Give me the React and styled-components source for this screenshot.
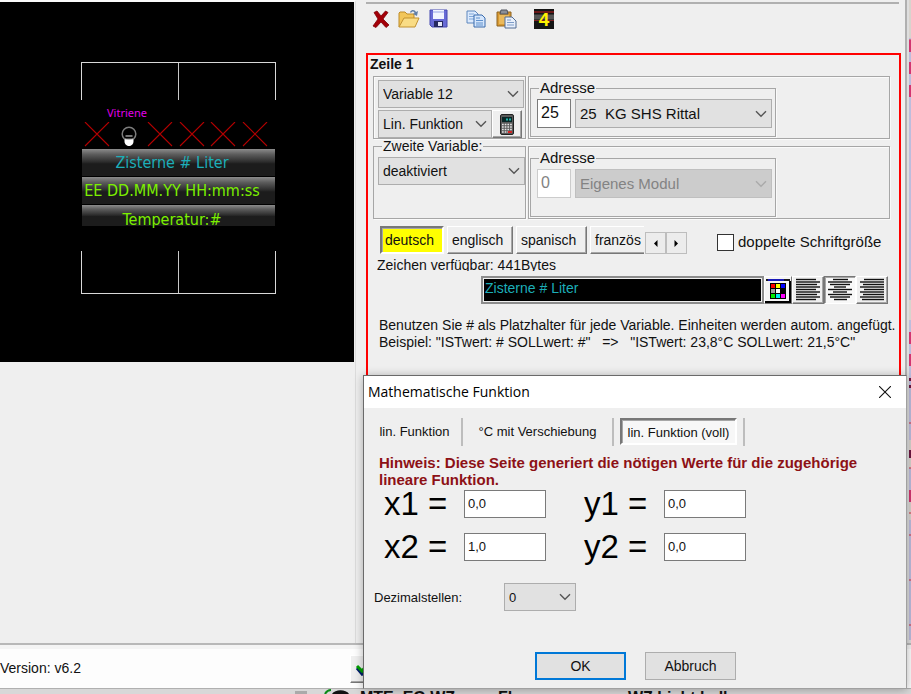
import React from "react";
import styled, { createGlobalStyle, css } from "styled-components";

const Global = createGlobalStyle`
  *, *::before, *::after { box-sizing: border-box; }
  body { margin: 0; background: #efefef; color: #111; font: 14px/17px "Liberation Sans", Arial, sans-serif; }
  button, input, select { font: inherit; color: inherit; margin: 0; border-radius: 0; }
`;

const Page = styled.div`
  position: relative;
  display: flex;
  flex-direction: column;
  min-height: 100vh;
  overflow: hidden;
`;
const Main = styled.main`
  flex: 1;
  display: flex;
  border-bottom: 2px solid #b8b8b8;
`;
const PreviewColumn = styled.section`
  flex: 0 0 356px;
  border-top: 2px solid #fafafa;
  border-right: 1px solid #dcdcdc;
`;
const Display = styled.div`
  display: flex;
  flex-direction: column;
  width: 354px;
  height: 360px;
  padding: 60px 78px 0 81px;
  background: #000;
`;
const Bracket = styled.div`
  display: grid;
  grid-template-columns: 1fr 1fr;
  height: ${(p) => (p.$bottom ? 43 : 38)}px;
  margin-top: ${(p) => (p.$bottom ? 24 : 0)}px;
  border: 1px solid #d8d8d8;
  border-${(p) => (p.$bottom ? "top" : "bottom")}: 0;
  &::before { content: ""; border-right: 1px solid #c8c8c8; }
`;
const DisplayLabel = styled.div`
  margin: 4px 0 0 26px;
  color: #e000e8;
  font: 11px/18px "Noto Sans", sans-serif;
`;
const Slots = styled.div`
  display: flex;
  justify-content: space-between;
  height: 27px;
  padding: 0 8px 0 3px;
`;
const DisplayLine = styled.div`
  height: ${(p) => p.$height}px;
  margin: 0 1px 1px;
  padding-top: ${(p) => p.$pad}px;
  padding-right: 13px;
  text-align: center;
  white-space: nowrap;
  color: ${(p) => p.$color};
  background: linear-gradient(#8c8c8c 0, #5c5c5c 20%, #2c2c2c 48%, #1c1c1c 55%, #1c1c1c);
  font: 16px/22px "DejaVu Sans Condensed", "DejaVu Sans", sans-serif;
`;

const Editor = styled.section`
  flex: 1;
  display: flex;
  flex-direction: column;
  min-width: 0;
  padding: 2px 4px 0 10px;
`;
const Toolbar = styled.div`
  display: flex;
  align-items: center;
  height: 51px;
  margin-right: 2px;
  padding: 0 0 20px 4px;
  border-top: 2px solid #b0b0b0;
`;
const ToolButton = styled.button`
  display: grid;
  place-items: center;
  width: 22px;
  height: 22px;
  padding: 0;
  margin-right: ${(p) => p.$gap}px;
  border: 0;
  background: none;
`;
const RowBox = styled.div`
  flex: 1;
  border: 2px solid #f00;
  padding: 1px 9px 0 5px;
`;
const RowTitle = styled.h2`
  margin: 0 -3px 3px;
  font-size: 14px;
  line-height: 17px;
  height: 17px;
`;
const Groups = styled.div`
  display: grid;
  grid-template-columns: 153px 1fr;
  column-gap: 2px;
  height: ${(p) => p.$height}px;
  margin-bottom: ${(p) => p.$gap}px;
`;
const Group = styled.div`
  min-width: 0;
  border: 1px solid #a6a6a6;
  box-shadow: inset 1px 1px #fafafa, 1px 1px #fafafa;
  padding: ${(p) => p.$pad};
`;
const Legend = styled.legend`
  height: ${(p) => (p.$large ? 18 : 17)}px;
  line-height: ${(p) => (p.$large ? 18 : 17)}px;
  margin-left: ${(p) => (p.$large ? 2 : 4)}px;
  padding: 0 1px;
  font-size: ${(p) => (p.$large ? 15 : 14)}px;
`;
const VariableSet = styled.fieldset`
  margin: -8px 0 0;
  padding: 2px 0 0 4px;
  border: 1px solid #a6a6a6;
  box-shadow: 1px 1px #fafafa;
  min-width: 0;
`;
const AddressSet = styled.fieldset`
  display: block;
  width: 245px;
  height: ${(p) => p.$height}px;
  margin: 0;
  padding: 2px 3px 0 6px;
  border: 1px solid #a6a6a6;
  box-shadow: 1px 1px #fafafa;
`;
const Line = styled.div`
  display: flex;
  align-items: center;
  gap: ${(p) => p.$gap || 0}px;
`;
const SelectBox = styled.div`
  display: grid;
  width: ${(p) => p.$width}px;
  height: ${(p) => p.$height || 28}px;
  margin-bottom: ${(p) => p.$below || 0}px;
  font-size: ${(p) => p.$font || 14}px;
  > * { grid-area: 1 / 1; }
  svg { justify-self: end; align-self: center; margin-right: 5px; pointer-events: none; }
`;
const SelectField = styled.select`
  appearance: none;
  width: 100%;
  padding: 0 22px 0 4px;
  border: 1px solid #adadad;
  background: #e1e1e1;
  &:disabled { background: #cccccc; color: #838383; border-color: #bfbfbf; opacity: 1; }
`;
const TextField = styled.input`
  width: ${(p) => p.$width}px;
  height: ${(p) => p.$height || 28}px;
  padding: 0 3px 2px;
  border: 1px solid #7a7a7a;
  background: #fff;
  font-size: ${(p) => p.$font || 13}px;
  &:disabled { color: #838383; border-color: #ccc; background: #fff; }
`;
const raised = css`
  border: 1px solid;
  border-color: #fff #777 #777 #fff;
  box-shadow: inset -1px -1px #a6a6a6;
  background: #efefef;
`;
const sunken = css`
  border: 1px solid;
  border-color: #777 #fff #fff #777;
  box-shadow: inset 1px 1px #a6a6a6;
`;
const IconButton = styled.button`
  display: grid;
  place-items: center;
  flex: none;
  width: ${(p) => p.$width || 31}px;
  height: 28px;
  padding: 0;
  ${raised}
  ${(p) => p.$pressed && css`${sunken} background: #f8f8f8;`}
`;
const ApplyButton = styled(IconButton)`
  justify-items: start;
  padding-left: 4px;
`;
const Tabs = styled.div`
  display: flex;
  align-items: flex-end;
  height: 29px;
  padding-left: 7px;
`;
const LanguageTab = styled.button`
  flex: none;
  width: ${(p) => p.$width}px;
  height: 28px;
  margin-right: ${(p) => (p.$cut ? 1 : 3)}px;
  padding: 0 0 0 4px;
  text-align: left;
  white-space: nowrap;
  ${raised}
  ${(p) => p.$cut && css`border-right: 0; box-shadow: inset 0 -1px #a6a6a6;`}
  ${(p) => p.$active && css`${sunken} background: #ffff00; border-width: 2px; padding-left: 3px;`}
`;
const ScrollButton = styled.button`
  display: grid;
  place-items: center;
  flex: none;
  width: 21px;
  height: 22px;
  padding: 0;
  border: 1px solid #bdbdbd;
  background: #ececec;
`;
const CheckLabel = styled.label`
  display: flex;
  align-items: center;
  gap: 4px;
  margin-left: 30px;
  padding-bottom: 3px;
  font-size: 15px;
  line-height: 18px;
  white-space: nowrap;
`;
const CheckBox = styled.input`
  appearance: none;
  width: 17px;
  height: 17px;
  border: 1px solid #333;
  background: #fff;
  &:checked { background: #333; }
`;
const Remaining = styled.div`
  height: 14px;
  margin: 3px 0 5px 4px;
  line-height: 16px;
  overflow: hidden;
`;
const InputLine = styled.div`
  display: flex;
  align-items: stretch;
  margin: 0 2px 0 108px;
  height: 28px;
`;
const ContentField = styled.input`
  flex: 1;
  min-width: 0;
  padding: 0 0 3px 2px;
  border: 2px solid #8c8c8c;
  outline: 1px solid #efefef;
  outline-offset: -3px;
  background: #000;
  color: #1caeb8;
`;
const Help = styled.p`
  margin: 13px -6px 0 6px;
  font-size: 14px;
  line-height: 17px;
  white-space: pre;
`;
const EdgeStrip = styled.div`
  flex: 0 0 6px;
  display: flex;
  border-left: 2px solid #b0b0b0;
  background: #dedede;
  svg { margin-left: auto; }
`;
const Footer = styled.footer`
  display: flex;
  justify-content: space-between;
  align-items: center;
  height: 44px;
  padding-right: 530px;
  border-top: 4px solid #f4f4f4;
  border-bottom: 1px solid #b0b0b0;
  background: #fdfdfd;
`;
const Sliver = styled.div`
  display: grid;
  grid-template-columns: 220px 75px 65px 138px 130px 1fr;
  height: 5px;
  overflow: hidden;
  background: #d8d8d8;
  font-weight: bold;
  font-size: 16px;
  line-height: 17px;
  white-space: nowrap;
`;

const Dialog = styled.div`
  position: absolute;
  top: 375px;
  left: 363px;
  right: 4px;
  height: 314px;
  display: flex;
  flex-direction: column;
  border: 1px solid #6a6a6a;
  border-bottom-color: #a0a0a0;
  border-right-color: #a0a0a0;
  background: #efefef;
  box-shadow: 0 1px 9px rgba(0, 0, 0, 0.3);
`;
const TitleBar = styled.header`
  display: flex;
  justify-content: space-between;
  align-items: center;
  height: 32px;
  padding: 0 15px 0 4px;
  background: #fff;
  color: #000;
  font: 14px/20px "Open Sans", "Noto Sans", sans-serif;
`;
const CloseButton = styled.button`
  display: grid;
  padding: 0;
  border: 0;
  background: none;
`;
const DialogTabs = styled.nav`
  display: flex;
  height: 28px;
  margin: 10px 0 0 4px;
`;
const DialogTab = styled.button`
  height: 28px;
  width: ${(p) => p.$width}px;
  padding: 0 0 2px;
  border: 0;
  border-right: 2px solid #bdbdbd;
  background: none;
  white-space: nowrap;
  font-size: 13px;
`;
const ActiveFrame = styled.span`
  display: block;
  height: 27px;
  margin: 0 6px;
  padding-top: 4px;
  ${sunken}
  border-width: 2px;
  background: #f7f7f7;
`;
const Warning = styled.p`
  max-width: 490px;
  margin: 8px 0 0 15px;
  color: #8d1116;
  font-weight: bold;
  font-size: 15px;
  line-height: 17px;
`;
const Coefficients = styled.div`
  display: grid;
  grid-template-columns: 80px 120px 80px 1fr;
  grid-auto-rows: 43px;
  margin-left: 20px;
  input { margin-top: 2px; }
`;
const BigLabel = styled.label`
  font-size: 33px;
  line-height: 31px;
  white-space: nowrap;
  color: #000;
`;
const Decimals = styled.div`
  display: flex;
  align-items: center;
  margin: 9px 0 0 10px;
  font-size: 13px;
  label { width: 130px; }
`;
const Actions = styled.div`
  display: flex;
  gap: 19px;
  margin: auto 170px 8px auto;
`;
const ActionButton = styled.button`
  width: 91px;
  height: 28px;
  padding: 0;
  border: ${(p) => (p.$primary ? "2px solid #0078d7" : "1px solid #adadad")};
  background: #e1e1e1;
`;

const Chevron = ({ muted }) => (
  <svg width="12" height="8" viewBox="0 0 12 8" fill="none" stroke={muted ? "#aaa" : "#555"} strokeWidth="1.4" aria-hidden="true">
    <path d="M1 1.2 6 6.2 11 1.2" />
  </svg>
);

function Select({ label, value, disabled, ...size }) {
  return (
    <SelectBox {...size}>
      <SelectField aria-label={label} disabled={disabled} defaultValue={value}>
        <option>{value}</option>
      </SelectField>
      <Chevron muted={disabled} />
    </SelectBox>
  );
}

const Cross = () => (
  <svg width="26" height="26" viewBox="0 0 26 26" stroke="#b40000" strokeWidth="1.1" aria-hidden="true">
    <path d="M1 0 25 24M25 0 1 24" />
  </svg>
);
const Bulb = () => (
  <svg width="26" height="26" viewBox="0 0 26 26" fill="none" aria-hidden="true">
    <circle cx="13" cy="12" r="6.800" stroke="#7d7d7d" strokeWidth="1.5" />
    <path d="M8.500 17.500h9v2c0 2-1.500 4.500-4.500 4.500s-4.500-2.500-4.500-4.500z" fill="#fff" />
    <path d="M9.500 14h7M9 17h8" stroke="#eee" strokeWidth="1.200" />
    <path d="M9.500 15.700h7" stroke="#000" strokeWidth="1.500" />
  </svg>
);
const DeleteIcon = () => (
  <svg width="20" height="20" viewBox="0 0 20 20" aria-hidden="true">
    <path d="M3 3.500 6 2l4 5 4.500-5 2.500 1.500L12 10l6 6-3 2.500-5-5.500-5 5.500-3-1.500L7 10z" fill="#a30008" stroke="#7d0006" strokeWidth=".8" />
  </svg>
);
const FolderIcon = () => (
  <svg width="22" height="20" viewBox="0 0 22 20" aria-hidden="true">
    <path d="M1 18V4l1-1h5l2 2h7v4" fill="#f2c65a" stroke="#bd8b28" />
    <path d="M1 18 6 9h15l-4 9z" fill="#f9dc85" stroke="#c29231" />
    <path d="M12 3c2-3 5-2 6 0l2-1-1 5-4-2 1.500-1C16 2 14 2 13 4z" fill="#607fa8" />
  </svg>
);
const SaveIcon = () => (
  <svg width="19" height="19" viewBox="0 0 19 19" aria-hidden="true">
    <path d="M1 1h17v17H3l-2-2z" fill="#686bd6" stroke="#4549b0" />
    <path d="M4 1h11v9H4z" fill="#f1f4ff" />
    <path d="M4 2h11v2H4z" fill="#c4ccf2" />
    <path d="M5 12h9v6H5z" fill="#252860" />
    <path d="M9 13h4v4H9z" fill="#e5e8fa" />
  </svg>
);
const CopyIcon = () => (
  <svg width="20" height="20" viewBox="0 0 20 20" aria-hidden="true">
    <path d="M1 2h8l3 3v9H1z" fill="#dceafd" stroke="#5d86bd" />
    <path d="M3 5h5M3 7.500h7M3 10h7" stroke="#7fa6d8" />
    <path d="M8 6h8l3 3v9H8z" fill="#d5e6fc" stroke="#386aac" />
    <path d="M10 9h4M10 11.500h7M10 14h7M10 16h7" stroke="#5f90cc" />
  </svg>
);
const PasteIcon = () => (
  <svg width="21" height="20" viewBox="0 0 21 20" aria-hidden="true">
    <path d="M1 3h14v14H1z" fill="#d99a32" stroke="#8d6220" />
    <path d="M5 1h6l1 4H4z" fill="#8b8f98" stroke="#4f535d" />
    <path d="M3 6h10v9H3z" fill="#eab95c" />
    <path d="M9 8h7l4 4v7H9z" fill="#e8effa" stroke="#526d96" />
    <path d="M11 11h4M11 13.500h7M11 16h7" stroke="#7c9bc7" />
  </svg>
);
const FourIcon = () => (
  <svg width="20" height="20" viewBox="0 0 20 20" aria-hidden="true">
    <path d="M0 0h20v20H0z" fill="#151515" />
    <path d="M0 3h20" stroke="#c02020" />
    <path d="M0 5.500h20v5H0z" fill="#555" />
    <path d="M0 11.500h20" stroke="#7d2222" />
    <text x="10" y="17" textAnchor="middle" fontFamily="Liberation Sans, Arial, sans-serif" fontSize="19" fontWeight="bold" fill="#fff200">4</text>
  </svg>
);
const CalculatorIcon = () => (
  <svg width="14" height="21" viewBox="0 0 14 21" aria-hidden="true">
    <rect x=".5" y=".5" width="13" height="20" rx="1.500" fill="#5a5a5a" stroke="#222" />
    <path d="M2 3h10v5H2z" fill="#082626" />
    <path d="M6 5.500h5" stroke="#24b5aa" strokeWidth="2" strokeDasharray="2 1" />
    <path d="M2 10.500h10M2 13h10M2 15.500h10M2 18h6" stroke="#e5e5e5" strokeWidth="1.700" strokeDasharray="1.700 1" />
    <path d="M8 18h4" stroke="#e02020" strokeWidth="1.800" />
  </svg>
);
const swatches = ["#f00", "#ff0", "#00f", "#a0a0a0", "#fff", "#000", "#0e0", "#0ee", "#f0f"];
const PaletteIcon = () => (
  <svg width="26" height="26" viewBox="0 0 26 26" aria-hidden="true">
    <path d="M0 0h26v26H0z" fill="#f4f4f4" />
    <path d="M1 2h24v2H1z" fill="#1a1a1a" />
    <path d="M3 2h16v2H3z" fill="#1919b8" />
    <path d="M0 25h26M25 4v22" stroke="#000" strokeWidth="2" />
    <path d="M5 6h16v16H5z" fill="#000" />
    {swatches.map((c, i) => (
      <rect key={c} x={6 + (i % 3) * 5} y={7 + Math.floor(i / 3) * 5} width="4" height="4" fill={c} />
    ))}
  </svg>
);
const alignRows = {
  left: [[0, 20], [0, 24], [0, 21], [0, 24], [0, 20], [0, 24], [0, 21], [0, 24], [0, 20]],
  center: [[5, 20], [0, 24], [2, 22], [6, 18], [0, 24], [5, 19], [0, 24], [2, 22], [6, 19]],
  right: [[4, 24], [0, 24], [3, 24], [0, 24], [4, 24], [0, 24], [3, 24], [0, 24], [2, 24]],
};
const AlignIcon = ({ side }) => (
  <svg width="24" height="24" viewBox="0 0 24 24" stroke="#111" strokeWidth="1.4" aria-hidden="true">
    {alignRows[side].map(([a, b], i) => (
      <path key={i} d={`M${a} ${i * 2.5 + 1.5}H${b}`} />
    ))}
  </svg>
);
const EdgeMarks = () => (
  <svg width="2" height="640" viewBox="0 0 2 640" aria-hidden="true">
    <path d="M0 0h2v640H0z" fill="#bdbddd" />
    <path d="M0 0h2v38H0zM0 300h2v20H0zM0 440h2v28H0zM0 490h2v30H0z" fill="#d8d3cd" />
    <path d="M0 40h2M0 73h2M0 423h2M0 468h2M0 513h2M0 535h2M0 580h2M0 625h2" stroke="#d03040" />
    <path d="M1 40v12M1 62v12M1 85v12M1 332v12M1 354v12M1 490v12" stroke="#d23570" strokeWidth="2" />
    <path d="M1 378v3M1 385v3M1 450v8" stroke="#6d1640" strokeWidth="2" />
  </svg>
);
const TickIcon = () => (
  <svg width="14" height="14" viewBox="0 0 14 14" fill="none" strokeWidth="3" aria-hidden="true">
    <path d="M2 6 7 12 13 5" stroke="#001f6b" />
    <path d="M2 4 7 9 13 2" stroke="#00a000" />
  </svg>
);
const SliverIcon = () => (
  <svg width="60" height="5" viewBox="0 0 60 5" aria-hidden="true">
    <path d="M0 2h12v3H0z" fill="#aaa" />
    <path d="M30 5c1-2 3-4 6-4" stroke="#0a8a16" strokeWidth="2" fill="none" />
    <path d="M37 5c3-5 14-5 17 0z" fill="#111" />
  </svg>
);

const tools = [
  ["Löschen", DeleteIcon, 6],
  ["Öffnen", FolderIcon, 7],
  ["Speichern", SaveIcon, 16],
  ["Kopieren", CopyIcon, 8],
  ["Einfügen", PasteIcon, 16],
  ["Zeile 4", FourIcon, 0],
];
const languages = [["deutsch", 64], ["englisch", 66], ["spanisch", 71], ["französ", 54]];
const coefficients = [["x1", "0,0"], ["y1", "0,0"], ["x2", "1,0"], ["y2", "0,0"]];

function Address({ number, name, disabled, height }) {
  return (
    <AddressSet $height={height}>
      <Legend $large>Adresse</Legend>
      <Line $gap={4}>
        <TextField aria-label="Adressnummer" $width={34} $height={29} $font={16} defaultValue={number} disabled={disabled} />
        <Select label="Adresse" value={name} disabled={disabled} $width={197} $height={29} $font={15} />
      </Line>
    </AddressSet>
  );
}

export default function App() {
  return (
    <Page>
      <Global />
      <Main>
        <PreviewColumn>
          <Display>
            <Bracket />
            <DisplayLabel>Vitriene</DisplayLabel>
            <Slots>
              <Cross /><Bulb /><Cross /><Cross /><Cross /><Cross />
            </Slots>
            <DisplayLine $height={27} $pad={3} $color="#1caeb8">Zisterne # Liter</DisplayLine>
            <DisplayLine $height={27} $pad={3} $color="#7cf000">EE DD.MM.YY HH:mm:ss</DisplayLine>
            <DisplayLine $height={21} $pad={4} $color="#7cf000">Temperatur:#</DisplayLine>
            <Bracket $bottom />
          </Display>
        </PreviewColumn>
        <Editor>
          <Toolbar>
            {tools.map(([name, Icon, gap]) => (
              <ToolButton key={name} aria-label={name} $gap={gap}><Icon /></ToolButton>
            ))}
          </Toolbar>
          <RowBox>
            <RowTitle>Zeile 1</RowTitle>
            <Groups $height={62} $gap={8}>
              <Group $pad="3px 0 0 4px">
                <Select label="Variable" value="Variable 12" $width={146} $below={2} />
                <Line>
                  <Select label="Funktion" value="Lin. Funktion" $width={114} />
                  <IconButton aria-label="Mathematische Funktion" $width={30}><CalculatorIcon /></IconButton>
                </Line>
              </Group>
              <Group $pad="2px 0 0 1px">
                <Address number="25" name={"25\u00a0 KG SHS Rittal"} height={58} />
              </Group>
            </Groups>
            <Groups $height={73} $gap={6}>
              <VariableSet>
                <Legend>Zweite Variable:</Legend>
                <Select label="Zweite Variable" value="deaktiviert" $width={147} />
              </VariableSet>
              <Group $pad="2px 0 0 1px">
                <Address number="0" name="Eigenes Modul" height={68} disabled />
              </Group>
            </Groups>
            <Tabs>
              {languages.map(([name, width], i) => (
                <LanguageTab key={name} $width={width} $active={i === 0} $cut={i === 3}>{name}</LanguageTab>
              ))}
              <ScrollButton aria-label="Zurück">
                <svg width="5" height="7" viewBox="0 0 5 7" aria-hidden="true"><path d="M4.500 0v7L1 3.500z" /></svg>
              </ScrollButton>
              <ScrollButton aria-label="Weiter">
                <svg width="5" height="7" viewBox="0 0 5 7" aria-hidden="true"><path d="M.5 0v7L4 3.500z" /></svg>
              </ScrollButton>
              <CheckLabel><CheckBox type="checkbox" />doppelte Schriftgröße</CheckLabel>
            </Tabs>
            <Remaining>Zeichen verfügbar: 441Bytes</Remaining>
            <InputLine>
              <ContentField aria-label="Text" defaultValue="Zisterne # Liter" />
              <IconButton aria-label="Farbe" $width={28}><PaletteIcon /></IconButton>
              <IconButton aria-label="Linksbündig" $width={32}><AlignIcon side="left" /></IconButton>
              <IconButton aria-label="Zentriert" $width={32} $pressed><AlignIcon side="center" /></IconButton>
              <IconButton aria-label="Rechtsbündig" $width={32}><AlignIcon side="right" /></IconButton>
            </InputLine>
            <Help>
              Benutzen Sie # als Platzhalter für jede Variable. Einheiten werden autom. angefügt.{"\n"}
              {'Beispiel: "ISTwert: # SOLLwert: #"   =>   "ISTwert: 23,8°C SOLLwert: 21,5°C"'}
            </Help>
          </RowBox>
        </Editor>
        <EdgeStrip><EdgeMarks /></EdgeStrip>
      </Main>
      <Footer>
        <span>Version: v6.2</span>
        <ApplyButton aria-label="Übernehmen"><TickIcon /></ApplyButton>
      </Footer>
      <Sliver aria-hidden="true">
        <span /><span /><SliverIcon /><span>MTE&nbsp; EG WZ</span><span>Flur</span><span>WZ Licht hell</span>
      </Sliver>
      <Dialog role="dialog" aria-labelledby="dialog-title">
        <TitleBar>
          <span id="dialog-title">Mathematische Funktion</span>
          <CloseButton aria-label="Schließen">
            <svg width="12" height="12" viewBox="0 0 12 12" stroke="#111" strokeWidth="1.1" aria-hidden="true"><path d="M0 0 12 12M12 0 0 12" /></svg>
          </CloseButton>
        </TitleBar>
        <DialogTabs>
          <DialogTab $width={95}>lin. Funktion</DialogTab>
          <DialogTab $width={151}>°C mit Verschiebung</DialogTab>
          <DialogTab $width={131}><ActiveFrame>lin. Funktion (voll)</ActiveFrame></DialogTab>
        </DialogTabs>
        <Warning>Hinweis: Diese Seite generiert die nötigen Werte für die zugehörige lineare Funktion.</Warning>
        <Coefficients>
          {coefficients.map(([name, value]) => (
            <React.Fragment key={name}>
              <BigLabel htmlFor={name}>{name} =</BigLabel>
              <TextField id={name} $width={82} defaultValue={value} />
            </React.Fragment>
          ))}
        </Coefficients>
        <Decimals>
          <label htmlFor="decimals">Dezimalstellen:</label>
          <SelectBox $width={72} $font={13}>
            <SelectField id="decimals" defaultValue="0"><option>0</option></SelectField>
            <Chevron />
          </SelectBox>
        </Decimals>
        <Actions>
          <ActionButton $primary>OK</ActionButton>
          <ActionButton>Abbruch</ActionButton>
        </Actions>
      </Dialog>
    </Page>
  );
}
